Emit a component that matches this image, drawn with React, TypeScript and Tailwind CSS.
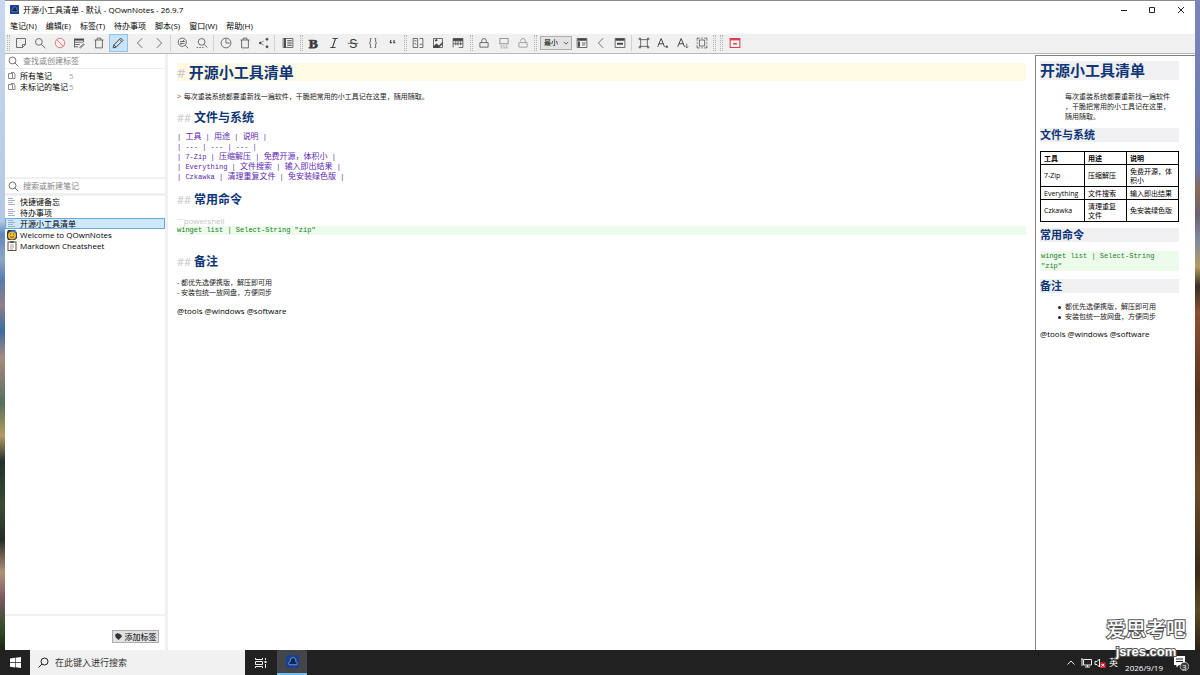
import React, { useState } from 'react';

const UI_FONT = "font-['Open_Sans','Noto_Sans_CJK_SC',sans-serif]";
const MONO_FONT = "font-['Liberation_Mono','Noto_Sans_CJK_SC',monospace]";

const MENUS = ['笔记(N)', '编辑(E)', '标签(T)', '待办事项', '脚本(S)', '窗口(W)', '帮助(H)'];

const TAGS = [
  { name: '所有笔记', count: 5 },
  { name: '未标记的笔记', count: 5 },
];

const NOTES = [
  { name: '快捷键备忘', icon: 'lines' },
  { name: '待办事项', icon: 'lines' },
  { name: '开源小工具清单', icon: 'lines' },
  { name: 'Welcome to QOwnNotes', icon: 'smile' },
  { name: 'Markdown Cheatsheet', icon: 'clip' },
];

const TOOLS = [
  ['7-Zip', '压缩解压', '免费开源，体积小'],
  ['Everything', '文件搜索', '输入即出结果'],
  ['Czkawka', '清理重复文件', '免安装绿色版'],
];

const SOURCE_ROWS = [
  '| 工具 | 用途 | 说明 |',
  '| --- | --- | --- |',
  ...TOOLS.map((row) => `| ${row.join(' | ')} |`),
];

// All toolbar glyphs are drawn on a 16x16 grid
const ICONS: { [key: string]: React.ReactNode } = {
  newNote: <path d="M2 2h12v8l-4 4H2zM14 10h-4v4" />,
  search: <><circle cx="6.5" cy="6.5" r="4.5" /><path d="M10 10l5 5" /></>,
  block: <g stroke="#e0525f"><circle cx="8" cy="8" r="6.3" /><path d="M3.5 3.5l9 9" /></g>,
  editNote: <><path d="M2 3h12M2 7h11M2 10h7M2 13h5M2 2v12M14 2v5" /><path d="M2 3.5h12" strokeWidth="2.5" /><path d="M9 14l5-5 1 1-5 4.5z" /></>,
  trash: <path d="M2 4h12M5.5 4V1.5h5V4M3.5 4v10.5h9V4" />,
  pencil: <path d="M1.5 14.5l1-4 9-9 3 3-9 9zM2.5 10.5l3 3M10 3l3 3" strokeWidth="1.3" />,
  prev: <path d="M11 1.5L4.5 8l6.5 6.5" />,
  next: <path d="M5 1.5L11.5 8 5 14.5" />,
  findReplace: <><circle cx="7" cy="7" r="5.5" /><path d="M11 11l4 4M4 6h6L8 4M10 8.5H4l2 2" /></>,
  findIn: <><circle cx="7.5" cy="6.5" r="4.5" /><path d="M11 10l4 4" /><path d="M1 14h9" strokeDasharray="2 1.5" /></>,
  clock: <><circle cx="8" cy="8" r="6.5" /><path d="M8 2.5V8h5" /></>,
  share: <g fill="#444"><circle cx="3" cy="8" r="1.2" /><circle cx="12" cy="3" r="1.4" /><circle cx="12" cy="13" r="1.4" /><path d="M3 8l5-3M3 8l5 3" strokeDasharray="2 1" /></g>,
  panel: <><path d="M1.5 2h13v12h-13z" /><path d="M4 2v12" strokeWidth="2.5" /><path d="M7 5h6M7 8h6M7 11h6" strokeWidth="1.5" /></>,
  italic: <path d="M6 2h7M3 14h7M10 2L6 14" strokeWidth="1.5" />,
  braces: <path d="M6 2H4.5v5L3 8l1.5 1v5H6M10 2h1.5v5L13 8l-1.5 1v5H10" />,
  quote: <path d="M5.5 4L4.5 6v1.5h2M10 4L9 6v1.5h2" strokeWidth="1.5" />,
  columns: <path d="M1.5 2h6v12h-6zM3 5h3M3 8l3 2M10 2h4.5v12H10M10 11l2-2 2 2" />,
  image: <><path d="M2 2h12v12H2z" /><path d="M2 13l4-4 3 3 5-5v2l-5 5H2z" fill="#444" /><path d="M4 5l2-1 1 1" strokeWidth="2" /></>,
  table: <><path d="M1.5 2h13v3h-13z" fill="#444" /><path d="M1.5 5v9M5 5v6M8 5v6M11.5 5v6M14.5 5v9M1.5 9h13M9 14h5.5" /></>,
  lock: <><path d="M2.5 7.5h11v6h-11z" /><path d="M5 7.5V5a3 3 0 016 0v2.5" /></>,
  encrypt: <g stroke="#777"><path d="M2.5 9V2h11v7M2 9h12" /><path d="M3 12h11M4 14.5h9" strokeDasharray="2 1.5" /></g>,
  unlock: <g stroke="#8a8a8a"><path d="M2.5 7.5h11v6h-11z" /><path d="M5 6V5a3 3 0 016 0v2.5" /></g>,
  layout: <><path d="M1.5 2h13v12h-13z" /><path d="M2 3.5h12" strokeWidth="3" /><path d="M4 6v7" strokeWidth="2.5" /><path d="M8 8h5M8 10.5h4" /></>,
  window: <><path d="M1.5 2h13v12h-13z" /><path d="M2 3.5h12" strokeWidth="3" /><path d="M4 9h8" strokeWidth="2.5" /></>,
  frame: <><path d="M3.5 3.5h9v9h-9z" /><path d="M1.5 1.5h2v2h-2zM12.5 1.5h2v2h-2zM1.5 12.5h2v2h-2zM12.5 12.5h2v2h-2z" /></>,
  fontUp: <><path d="M1 13L5.5 2 10 13M2.5 9h6" strokeWidth="1.3" /><path d="M11.5 13.5l1.5-2 1.5 2z" fill="#444" /></>,
  fontDown: <><path d="M1 13L5.5 2 10 13M2.5 9h6" strokeWidth="1.3" /><path d="M11 12.5l2 2 2-2M13 9v5" /></>,
  fullscreen: <><path d="M4.5 4h7v8h-7z" /><path d="M1.5 5V1.5H5M11 1.5h3.5V5M14.5 11v3.5H11M5 14.5H1.5V11M7 1.5h2M7 14.5h2M1.5 7v2M14.5 7v2" /></>,
  close: <g stroke="#d6404f"><path d="M1.5 2h13v12h-13z" strokeWidth="1.4" /><path d="M1.5 3h13" strokeWidth="3" /><path d="M5.5 9h5" strokeWidth="2" /></g>,
};

const Icon: React.FC<{ name: string }> = ({ name }) => (
  <svg viewBox="0 0 16 16" className="w-3 h-3 shrink-0" fill="none" stroke="#444" strokeWidth="1">
    {name === 'bold' && <text x="1" y="14" fontSize="18" fontWeight="bold" fontFamily="Liberation Serif, serif" fill="#333">B</text>}
    {name === 'strike' && (
      <>
        <text x="3" y="14" fontSize="16" fontFamily="Liberation Sans, sans-serif" fill="#333" stroke="none">S</text>
        <path d="M1 8.5h14" />
      </>
    )}
    {ICONS[name]}
  </svg>
);

const ToolGroup: React.FC<{ icons: string[]; width: string; active?: string }> = ({ icons, width, active }) => (
  <div className={`flex h-[18px] shrink-0 ${width}`}>
    {icons.map((icon) => (
      <button
        key={icon}
        aria-label={icon}
        className={`flex-1 flex items-center justify-center border ${icon === active ? 'bg-[#c8e2f8] border-[#8fc3ee]' : 'border-transparent'}`}
      >
        <Icon name={icon} />
      </button>
    ))}
  </div>
);

const Separator = () => <div className="w-px h-[16px] ml-px mr-[2px] bg-[#d0d0d0] shrink-0" />;
const Grip = () => <div className="w-[3px] h-[16px] mx-px border-x border-dotted border-[#b4b4b4] shrink-0" />;

const Logo = () => (
  <svg viewBox="0 0 16 16" className="w-full h-full">
    <rect width="16" height="16" rx="1" fill="#1b3f94" />
    <path d="M4 12l-1-2 2-2 1-4 3-1 3 2v3l2 2-1 2H4z" fill="#14254f" stroke="#7fb0e8" strokeWidth="1" />
  </svg>
);

const NoteIcon: React.FC<{ kind: string }> = ({ kind }) => (
  <svg viewBox="0 0 10 10" className="w-[10px] h-[10px] shrink-0" fill="none">
    {kind === 'lines' && <path d="M1 1.5h5M1 3.5h7M1 5.5h5M1 7.5h7" stroke="#9fb0c8" />}
    {kind === 'smile' && (
      <>
        <path d="M1 0h7l2 3v5L8 10H1L0 8V2z" fill="#2a3b5c" />
        <circle cx="5" cy="5.5" r="4" fill="#f2bb2e" />
        <path d="M3 4h1M6 4h1M3 6.5q2 2 4 0" stroke="#3a2b10" strokeWidth=".7" />
        <path d="M5 1l4 1" stroke="#4c86c6" strokeWidth="1.5" />
      </>
    )}
    {kind === 'clip' && (
      <>
        <rect x="1" y="1" width="8" height="8.5" fill="#fff" stroke="#6d4a3e" />
        <path d="M3 1h4" stroke="#444" strokeWidth="1.5" />
        <path d="M3 4h4M3 6h4M3 8h3" stroke="#888" strokeWidth=".8" />
      </>
    )}
  </svg>
);

const SearchRow: React.FC<{ placeholder: string }> = ({ placeholder }) => (
  <label className="flex items-center h-[14px] pl-[3px] gap-[4px] bg-white shrink-0">
    <svg viewBox="0 0 16 16" className="w-[11px] h-[11px]" fill="none" stroke="#555" strokeWidth="1.2">
      <circle cx="6.5" cy="6.5" r="5" /><path d="M10 10l5 5" />
    </svg>
    <input aria-label={placeholder} placeholder={placeholder} className="flex-1 min-w-0 text-[8px] leading-[14px] outline-none placeholder:text-[#858585]" />
  </label>
);

// Latin cells stay at 7px, Chinese runs are one size up
const SourceLine: React.FC<{ text: string }> = ({ text }) => (
  <div className="whitespace-pre h-[10px]">
    {text.split(/([\u4e00-\u9fff，]+)/).map((part, i) => (
      <span key={i} className={i % 2 ? 'text-[8px]' : 'text-[7px]'}>{part}</span>
    ))}
  </div>
);

const EditorHeading: React.FC<{ children: React.ReactNode }> = ({ children }) => (
  <h2 className="h-[16px] text-[12px] leading-[16px] font-bold text-[#0e3576]">
    <span className="font-normal text-[11px] text-[#c4c4c4]">## </span>{children}
  </h2>
);

const PreviewHeading: React.FC<{ children: React.ReactNode }> = ({ children }) => (
  <h2 className="text-[11px] leading-[14px] font-bold text-[#0e3576] bg-[#f0f0f3]">{children}</h2>
);

const TitleBar = () => (
  <header className="flex items-center h-[17px] shrink-0 pl-[5px]">
    <div className="w-[9px] h-[9px]"><Logo /></div>
    <h1 className="ml-[4px] flex-1 text-[8px] text-black">开源小工具清单 - 默认 - QOwnNotes - 26.9.7</h1>
    <button aria-label="minimize" className="w-[28px] h-[17px] flex items-center justify-center">
      <svg viewBox="0 0 8 8" className="w-2 h-2" stroke="#222"><path d="M1 4.5h6" /></svg>
    </button>
    <button aria-label="maximize" className="w-[28px] h-[17px] flex items-center justify-center">
      <svg viewBox="0 0 8 8" className="w-2 h-2" fill="none" stroke="#222"><path d="M1.5 1.5h5v5h-5z" /></svg>
    </button>
    <button aria-label="close window" className="w-[29px] h-[17px] flex items-center justify-center">
      <svg viewBox="0 0 8 8" className="w-2 h-2" stroke="#222"><path d="M1 1l6 6M7 1L1 7" /></svg>
    </button>
  </header>
);

const Toolbar = () => (
  <div className="flex items-center h-[20px] shrink-0 bg-[#f0f0f0] border-b border-[#b8b8b8] pl-px pb-px">
    <Grip />
    <ToolGroup width="w-[117px]" icons={['newNote', 'search', 'block', 'editNote', 'trash', 'pencil']} active="pencil" />
    <div className="w-[2px]" />
    <ToolGroup width="w-[39px]" icons={['prev', 'next']} />
    <Separator />
    <ToolGroup width="w-[39px]" icons={['findReplace', 'findIn']} />
    <Separator />
    <ToolGroup width="w-[57px]" icons={['clock', 'trash', 'share']} />
    <Separator />
    <ToolGroup width="w-[22px]" icons={['panel']} />
    <Grip />
    <ToolGroup width="w-[99px]" icons={['bold', 'italic', 'strike', 'braces', 'quote']} />
    <Grip />
    <ToolGroup width="w-[60px]" icons={['columns', 'image', 'table']} />
    <div className="w-px" />
    <Grip />
    <ToolGroup width="w-[59px]" icons={['lock', 'encrypt', 'unlock']} />
    <Grip />
    <div className="relative flex ml-[2px]">
      <select aria-label="布局" className="appearance-none w-[32px] h-[14px] pl-[3px] text-[7px] leading-[12px] text-black bg-[#e3e3e3] border border-[#adadad]">
        <option>最小</option>
      </select>
      <svg viewBox="0 0 8 8" className="absolute right-[3px] top-[4px] w-[6px] h-[6px] pointer-events-none" fill="none" stroke="#333"><path d="M1 2.5l3 3 3-3" /></svg>
    </div>
    <ToolGroup width="w-[58px]" icons={['layout', 'prev', 'window']} />
    <Separator />
    <ToolGroup width="w-[78px]" icons={['frame', 'fontUp', 'fontDown', 'fullscreen']} />
    <Grip />
    <div className="w-[2px]" />
    <Grip />
    <ToolGroup width="w-[22px]" icons={['close']} />
  </div>
);

const Sidebar = () => {
  const [current, setCurrent] = useState('开源小工具清单');

  return (
    <aside className="w-[163px] shrink-0 flex flex-col border-r-[3px] border-[#f0f0f0] text-[8px] text-black">
      <SearchRow placeholder="查找或创建标签" />
      <ul className="h-[109px] border-t border-[#ececec] pt-px shrink-0">
        {TAGS.map((tag) => (
          <li key={tag.name} className="flex items-center h-[11px] pl-[3px]">
            <svg viewBox="0 0 8 8" className="w-2 h-2 mr-[4px]" fill="none" stroke="#888"><path d="M.5 1.5h4v5h-4zM3 .5h3l1 2v4H5" /></svg>
            <span className="w-[49px]">{tag.name}</span>
            <span className="text-[#a0a0a0]">{tag.count}</span>
          </li>
        ))}
      </ul>
      <div className="h-[2px] bg-[#f0f0f0] shrink-0" />
      <SearchRow placeholder="搜索或新建笔记" />
      <ul className="flex-1 border-t-[3px] border-[#f0f0f0]">
        {NOTES.map((note) => (
          <li key={note.name}>
            <button
              onClick={() => setCurrent(note.name)}
              className={`flex items-center w-full h-[11px] gap-[3px] pl-px border ${current === note.name ? 'bg-[#cce8ff] border-[#6ba8d8]' : 'border-transparent'}`}
            >
              <NoteIcon kind={note.icon} />
              {note.name}
            </button>
          </li>
        ))}
      </ul>
      <div className="h-[36px] shrink-0 border-t-2 border-[#f0f0f0] flex justify-end items-end pr-[6px] pb-[7px]">
        <button className="flex items-center justify-center gap-[3px] w-[47px] h-[13px] bg-[#e1e1e1] border border-[#adadad]">
          <svg viewBox="0 0 8 8" className="w-[7px] h-[7px]" fill="#333"><path d="M0 2l3-2 4 2 1 2-4 4-3-3z" /></svg>
          添加标签
        </button>
      </div>
    </aside>
  );
};

const Editor = () => (
  <main className="flex-1 min-w-0 pl-[9px] pr-[9px] pt-[9px] text-black">
    <h1 className="h-[18px] text-[15px] leading-[18px] font-bold text-[#0e3576] bg-[#fffae3]">
      <span className="font-normal text-[13px] text-[#c4c4c4]"># </span>开源小工具清单
    </h1>
    <p className="mt-[10px] h-[10px] text-[7px] leading-[10px] text-[#222]">
      <span className="text-[8px] text-[#a8442a]">&gt; </span>每次重装系统都要重新找一遍软件，干脆把常用的小工具记在这里，随用随取。
    </p>
    <div className="mt-[9px]"><EditorHeading>文件与系统</EditorHeading></div>
    <div className={`mt-[6px] ${MONO_FONT} text-[7px] leading-[10px] text-[#5a1fb0]`}>
      {SOURCE_ROWS.map((row) => <SourceLine key={row} text={row} />)}
    </div>
    <div className="mt-[10px]"><EditorHeading>常用命令</EditorHeading></div>
    <div className="mt-[8px] text-[8px] leading-[10px] text-[#c4c4c4]">```powershell</div>
    <pre className={`${MONO_FONT} text-[7px] leading-[9px] text-[#1d7a1d] bg-[#ecfbec]`}>winget list | Select-String "zip"</pre>
    <div className="mt-[19px]"><EditorHeading>备注</EditorHeading></div>
    <div className="mt-[8px] text-[7px] leading-[10px] text-[#222]">
      <p>- 都优先选便携版，解压即可用</p>
      <p>- 安装包统一放网盘，方便同步</p>
    </div>
    <p className="mt-[8px] text-[8px] leading-[10px]">@tools @windows @software</p>
  </main>
);

const Preview = () => (
  <section className="w-[160px] shrink-0 mt-px border-l border-t border-[#828282] pl-[4px] pr-[16px] pt-[5px] text-black">
    <h1 className="h-[19px] text-[15px] leading-[19px] font-bold text-[#0e3576] bg-[#f0f0f3]">开源小工具清单</h1>
    <blockquote className="mt-[12px] ml-[25px] text-[7px] leading-[10px] whitespace-nowrap text-[#222]">
      每次重装系统都要重新找一遍软件<br />，干脆把常用的小工具记在这里，<br />随用随取。
    </blockquote>
    <div className="mt-[6px]"><PreviewHeading>文件与系统</PreviewHeading></div>
    <table className="mt-[9px] w-full table-fixed border-collapse text-[7px] leading-[9px]">
      <colgroup>
        <col className="w-[44px]" />
        <col className="w-[42px]" />
        <col />
      </colgroup>
      <thead>
        <tr className="h-[13px]">
          {['工具', '用途', '说明'].map((title) => (
            <th key={title} className="border border-black px-[3px] py-px text-left font-bold">{title}</th>
          ))}
        </tr>
      </thead>
      <tbody>
        {TOOLS.map(([name, use, desc]) => (
          <tr key={name} className={name === 'Everything' ? 'h-[13px]' : 'h-[22px]'}>
            <td className="border border-black px-[3px] py-px">{name}</td>
            <td className="border border-black px-[3px] py-px">{use === '清理重复文件' ? <>清理重复<br />文件</> : use}</td>
            <td className="border border-black px-[3px] py-px">{desc === '免费开源，体积小' ? <>免费开源，体<br />积小</> : desc}</td>
          </tr>
        ))}
      </tbody>
    </table>
    <div className="mt-[6px]"><PreviewHeading>常用命令</PreviewHeading></div>
    <pre className={`mt-[9px] px-px ${MONO_FONT} text-[7px] leading-[10px] whitespace-pre-wrap text-[#1d7a1d] bg-[#ecfbec]`}>winget list | Select-String "zip"</pre>
    <div className="mt-[8px]"><PreviewHeading>备注</PreviewHeading></div>
    <ul className="mt-[9px] pl-[18px] text-[7px] leading-[10px] text-[#222]">
      {['都优先选便携版，解压即可用', '安装包统一放网盘，方便同步'].map((item) => (
        <li key={item} className="flex items-center gap-[4px]">
          <span className="w-[3px] h-[3px] rounded-full bg-[#222]" />
          {item}
        </li>
      ))}
    </ul>
    <p className="mt-[7px] text-[8px] leading-[10px]">@tools @windows @software</p>
  </section>
);

const Taskbar = () => (
  <footer className="flex h-[25px] shrink-0 bg-[#212121] text-white text-[8px]">
    <button aria-label="开始" className="w-[30px] flex items-center justify-center">
      <svg viewBox="0 0 11 11" className="w-[11px] h-[11px]" fill="#fff"><path d="M0 1.5l5-.7v4.5H0zM5.6.7L11 0v5.3H5.6zM0 5.9h5v4.5l-5-.7zM5.6 5.9H11V11l-5.4-.7z" /></svg>
    </button>
    <label className="flex items-center w-[215px] bg-[#f1f1f1] pl-[8px] gap-[6px]">
      <svg viewBox="0 0 11 11" className="w-[11px] h-[11px]" fill="none" stroke="#222"><circle cx="6.5" cy="4.5" r="3.5" /><path d="M4 7L.5 10.5" /></svg>
      <input aria-label="搜索" placeholder="在此键入进行搜索" className="flex-1 min-w-0 text-[9px] outline-none placeholder:text-[#333]" />
    </label>
    <button aria-label="任务视图" className="w-[32px] flex items-center justify-center">
      <svg viewBox="0 0 12 12" className="w-3 h-3" fill="none" stroke="#eee"><path d="M.5 1v1.5h7V1M.5 4.5h7v3h-7zM.5 11V9.5h7V11M10.5 1v2M10.5 7v4" /><path d="M9.5 5h2" strokeWidth="2" /></svg>
    </button>
    <button aria-label="QOwnNotes" className="w-[30px] flex items-center justify-center bg-[#434549] border-b-2 border-[#76b9ed]">
      <div className="w-[13px] h-[13px]"><Logo /></div>
    </button>
    <div className="ml-auto flex items-center">
      <svg viewBox="0 0 10 10" className="w-[10px] h-[10px]" fill="none" stroke="#eee"><path d="M1.5 6.5L5 3l3.5 3.5" /></svg>
      <svg viewBox="0 0 12 10" className="w-[12px] h-[10px] ml-[4px]" fill="none" stroke="#eee"><path d="M3.5 1.5h8V7h-8zM1 1h2M2 1v7M5 9h5M7.5 7v2" /></svg>
      <svg viewBox="0 0 12 10" className="w-[12px] h-[10px] ml-[2px]"><path d="M1 3.5h2L5.5 1v8L3 6.5H1z" fill="none" stroke="#eee" /><rect x="6" y="4.5" width="5.5" height="5.5" fill="#d92b2b" /><path d="M7.5 6L10 8.5M10 6L7.5 8.5" stroke="#fff" /></svg>
      <span className="ml-[3px] text-[9px] leading-[25px]">英</span>
      <time className="ml-[7px] self-end leading-[14px]">2026/9/19</time>
      <button aria-label="通知" className="relative ml-[10px] mr-[11px]">
        <svg viewBox="0 0 16 16" className="w-4 h-4"><path d="M1 1h11v9H6l-2.5 2.5V10H1z" fill="#fff" /><path d="M3 4h7M3 6.5h7" stroke="#222" /><circle cx="11.5" cy="11.5" r="4.3" fill="#3a3a3a" stroke="#ccc" strokeWidth=".8" /></svg>
        <span className="absolute left-[9px] top-[7px] text-[8px] leading-[10px]">3</span>
      </button>
    </div>
  </footer>
);

export default function App() {
  return (
    <div className={`relative h-screen flex flex-col overflow-hidden bg-white ${UI_FONT}`}>
      <div className="flex-1 min-h-0 flex">
        <div className="w-[5px] shrink-0 bg-[linear-gradient(#c9d8ee_0%,#b4c8e4_34%,#5f86bb_36%,#8fa6c2_40%,#5a7bb0_43%,#8c8088_47%,#3f6ba0_51%,#a88a80_55%,#56705c_62%,#b39a62_67%,#22322a_71%,#3a4c30_78%,#232d25_83%,#b39078_88%,#7a5a62_92%,#2f4a26_97%,#1d2418_100%)]" />
        <div className="flex-1 min-w-0 flex flex-col bg-white border-t border-[#8c8c8c]">
          <TitleBar />
          <nav className="flex items-center h-[16px] shrink-0 pl-[5px] gap-[9px] text-[8px] text-black">
            {MENUS.map((menu) => <button key={menu}>{menu}</button>)}
          </nav>
          <Toolbar />
          <div className="flex-1 min-h-0 flex">
            <Sidebar />
            <Editor />
            <Preview />
          </div>
        </div>
        <div className="w-[5px] shrink-0 bg-[linear-gradient(#7b86b8_0%,#6a78ae_26%,#8a6a5c_29%,#6b6270_33%,#7f8ca0_37%,#b59a62_41%,#3a2e26_44%,#8a4f34_48%,#5a3420_60%,#6b4a2a_75%,#3a2a18_88%,#5c4a26_94%,#2a2014_100%)]" />
      </div>
      <Taskbar />
      <div className="absolute right-[12px] bottom-[14px] w-[84px] text-center text-white pointer-events-none [-webkit-text-stroke:2px_#555] [paint-order:stroke_fill]">
        <div className="text-[20px] leading-[26px] font-medium">爱思考吧</div>
        <div className="text-[13px] leading-[18px] font-bold font-['Liberation_Sans',sans-serif]">jsres.com</div>
      </div>
    </div>
  );
}
